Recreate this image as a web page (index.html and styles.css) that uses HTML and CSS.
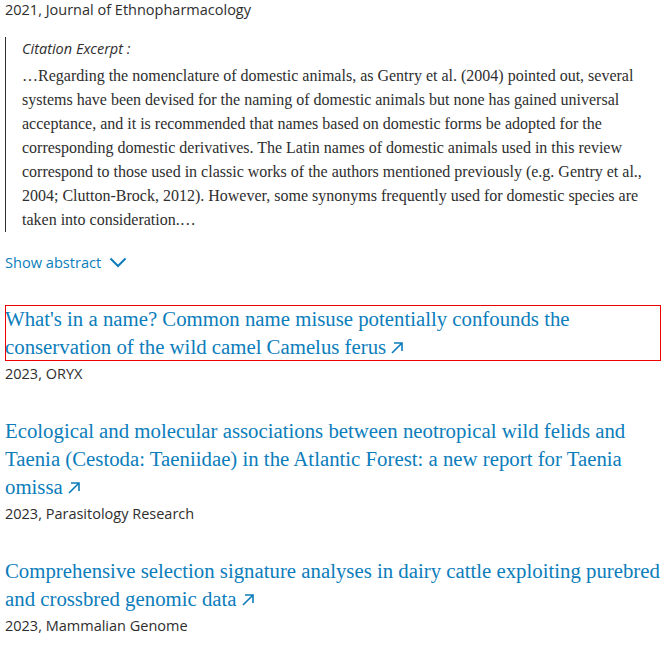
FILE: index.html
```html
<!DOCTYPE html>
<html>
<head>
<meta charset="utf-8">
<link rel="stylesheet" href="styles.css">
</head>
<body>
<div class="page">
  <div class="meta first">2021, Journal of Ethnopharmacology</div>
  <div class="excerpt">
    <div class="excerpt-label">Citation Excerpt :</div>
    <p class="excerpt-text">…Regarding the nomenclature of domestic animals, as Gentry et al. (2004) pointed out, several systems have been devised for the naming of domestic animals but none has gained universal acceptance, and it is recommended that names based on domestic forms be adopted for the corresponding domestic derivatives. The Latin names of domestic animals used in this review correspond to those used in classic works of the authors mentioned previously (e.g. Gentry et al., 2004; Clutton-Brock, 2012). However, some synonyms frequently used for domestic species are taken into consideration.…</p>
  </div>
  <button class="show-abstract">Show abstract <svg class="chev" width="18" height="11" viewBox="0 0 18 11"><path d="M1.5 1.5 L9 9 L16.5 1.5" fill="none" stroke="#0c7dbb" stroke-width="2"/></svg></button>

  <ul class="list">
    <li class="item">
      <a class="title focused" href="#">What's in a name? Common name misuse potentially confounds the conservation of the wild camel Camelus ferus<svg class="ext" width="14" height="14" viewBox="0 0 14 14"><path d="M2 12 L12 2 M4 2 H12 V10" fill="none" stroke="#0c7dbb" stroke-width="1.6"/></svg></a>
      <div class="meta">2023, ORYX</div>
    </li>
    <li class="item">
      <a class="title" href="#">Ecological and molecular associations between neotropical wild felids and Taenia (Cestoda: Taeniidae) in the Atlantic Forest: a new report for Taenia omissa<svg class="ext" width="14" height="14" viewBox="0 0 14 14"><path d="M2 12 L12 2 M4 2 H12 V10" fill="none" stroke="#0c7dbb" stroke-width="1.6"/></svg></a>
      <div class="meta">2023, Parasitology Research</div>
    </li>
    <li class="item">
      <a class="title" href="#">Comprehensive selection signature analyses in dairy cattle exploiting purebred and crossbred genomic data<svg class="ext" width="14" height="14" viewBox="0 0 14 14"><path d="M2 12 L12 2 M4 2 H12 V10" fill="none" stroke="#0c7dbb" stroke-width="1.6"/></svg></a>
      <div class="meta">2023, Mammalian Genome</div>
    </li>
  </ul>
</div>
</body>
</html>
```

FILE: styles.css
```css
html, body {
  margin: 0;
  padding: 0;
  background: #fff;
}
.page {
  padding: 0 5px;
  color: #2e2e2e;
}
.meta {
  font-family: "Open Sans", "Noto Sans", sans-serif;
  font-size: 14.5px;
  line-height: 24px;
  color: #2e2e2e;
}
.meta.first {
  line-height: 20px;
}
.excerpt {
  margin-top: 17px;
  border-left: 1px solid #2e2e2e;
  padding-left: 16px;
}
.excerpt-label {
  font-family: "Open Sans", "Noto Sans", sans-serif;
  font-style: italic;
  font-size: 14.5px;
  line-height: 24px;
}
.excerpt-text {
  margin: 3px 0 0;
  font-family: "Liberation Serif", serif;
  font-size: 16px;
  line-height: 24px;
  color: #2e2e2e;
}
.show-abstract {
  margin-top: 18px;
  padding: 0;
  border: 0;
  background: none;
  font-family: "Open Sans", "Noto Sans", sans-serif;
  font-size: 14.6px;
  line-height: 24px;
  color: #0c7dbb;
  display: flex;
  align-items: center;
  gap: 8px;
}
.list {
  list-style: none;
  margin: 31px 0 0;
  padding: 0;
}
.item {
  margin-bottom: 31px;
}
.title {
  display: block;
  font-family: "Liberation Serif", serif;
  font-size: 20.8px;
  line-height: 28px;
  color: #0c7dbb;
  text-decoration: none;
}
.title.focused {
  outline: 1px solid #e00;
  outline-offset: -1px;
}
.ext {
  margin-left: 4px;
  vertical-align: -1px;
}
.item .meta {
  margin-top: 1px;
}
```
